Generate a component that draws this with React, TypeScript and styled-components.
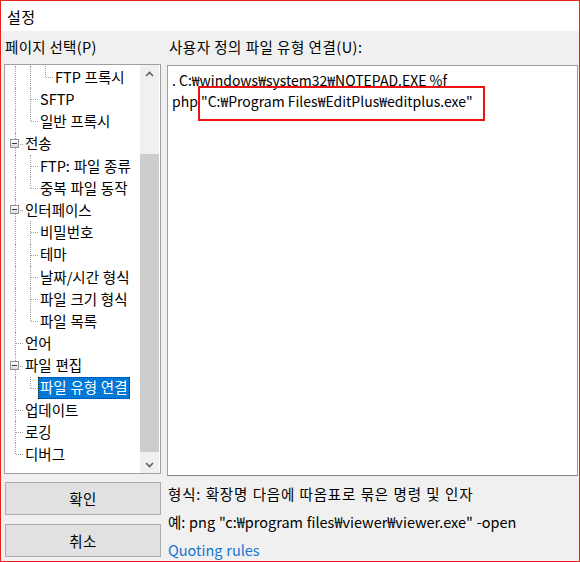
import React from 'react';
import styled, { createGlobalStyle } from 'styled-components';

const GlobalStyle = createGlobalStyle`
  html, body {
    margin: 0;
    padding: 0;
    background: #ffffff;
  }
  body {
    font-family: "Noto Sans CJK KR", "Noto Sans", sans-serif;
    font-size: 14.5px;
    color: #000;
  }
`;

// window frame
const Window = styled.div`
  width: 580px;
  height: 562px;
  box-sizing: border-box;
  border: 1px solid #e8231d;
  background: #f0f0f0;
  display: flex;
  flex-direction: column;
  overflow: hidden;
`;

const TitleBar = styled.div`
  flex: none;
  height: 30px;
  background: #ffffff;
  display: flex;
  align-items: center;
  padding-left: 6px;
  font-size: 15px;
  letter-spacing: 0.5px;
  line-height: 1;
`;

const Body = styled.div`
  display: grid;
  grid-template-columns: 157px 411px;
  column-gap: 6px;
  padding: 2px 0 0 3px;
`;

const Column = styled.div`
  display: flex;
  flex-direction: column;
`;

const GroupLabel = styled.div<{ $indent?: number; $spread?: number }>`
  flex: none;
  height: 31px;
  box-sizing: border-box;
  padding-bottom: 3px;
  display: flex;
  align-items: center;
  padding-left: ${(p) => p.$indent ?? 1}px;
  letter-spacing: ${(p) => p.$spread ?? 0}px;
  line-height: 1;
  white-space: nowrap;
`;

// tree view
const TreeBox = styled.div`
  flex: none;
  height: 410px;
  box-sizing: border-box;
  border: 1px solid #a0a0a0;
  background: #ffffff;
  display: flex;
`;

const TreeList = styled.div`
  flex: 1;
  padding: 1px 0 0 3px;
  overflow: hidden;
`;

const TreeRow = styled.div`
  height: 22.2px;
  display: flex;
  align-items: stretch;
`;

type GuideKind = 'line' | 'tee' | 'elbow' | 'blank';

const Guide = styled.div<{ $kind: GuideKind }>`
  width: 15px;
  flex: none;
  position: relative;

  &::before {
    content: '';
    display: ${(p) => (p.$kind === 'blank' ? 'none' : 'block')};
    position: absolute;
    left: 7px;
    top: 0;
    bottom: ${(p) => (p.$kind === 'elbow' ? '50%' : '0')};
    border-left: 1px dotted #a0a0a0;
  }

  &::after {
    content: '';
    display: ${(p) => (p.$kind === 'tee' || p.$kind === 'elbow' ? 'block' : 'none')};
    position: absolute;
    left: 8px;
    right: 0;
    top: 50%;
    border-top: 1px dotted #a0a0a0;
  }
`;

const Expander = styled.span`
  position: absolute;
  left: 2px;
  top: 50%;
  margin-top: -5px;
  width: 9px;
  height: 9px;
  box-sizing: border-box;
  border: 1px solid #929292;
  background: linear-gradient(#ffffff, #dcdcdc);
  z-index: 1;

  &::before {
    content: '';
    position: absolute;
    left: 1px;
    right: 1px;
    top: 3px;
    border-top: 1px solid #2d3a5a;
  }
`;

const ItemLabel = styled.span<{ $selected?: boolean }>`
  display: flex;
  align-items: center;
  padding: 0 2px;
  white-space: nowrap;
  line-height: 1;
  word-spacing: 0.5px;
  box-sizing: border-box;
  color: ${(p) => (p.$selected ? '#ffffff' : '#000000')};
  background: ${(p) => (p.$selected ? '#0078d7' : 'transparent')};
  outline: ${(p) => (p.$selected ? '1px dotted #3a2a00' : 'none')};
  outline-offset: -1px;
`;

const ScrollBar = styled.div`
  width: 19px;
  margin-right: 1px;
  background: #f0f0f0;
  display: flex;
  flex-direction: column;
`;

const ScrollButton = styled.div`
  height: 17px;
  display: flex;
  align-items: center;
  justify-content: center;
  color: #606060;
`;

const ScrollThumb = styled.div`
  margin-top: 72px;
  height: 298px;
  background: #cdcdcd;
`;

const Spacer = styled.div`
  flex: 1;
`;

// buttons
const ButtonStack = styled.div`
  display: flex;
  flex-direction: column;
  gap: 9px;
  padding: 8px 0 0 1px;
`;

const DialogButton = styled.button`
  flex: none;
  height: 33px;
  box-sizing: border-box;
  border: 1px solid #adadad;
  background: #e1e1e1;
  font-family: inherit;
  font-size: 14.5px;
  letter-spacing: 0.5px;
  color: #000;
  padding: 0;
`;

// right panel
const EditBox = styled.div`
  flex: none;
  position: relative;
  margin-top: 1px;
  height: 411px;
  box-sizing: border-box;
  border: 1px solid #a0a0a0;
  border-bottom-color: #828282;
  background: #ffffff;
  padding: 4px 0 0 4px;
  font-size: 14px;
  line-height: 21px;
`;

const EditLine = styled.div`
  white-space: pre;
`;

const Highlight = styled.div`
  position: absolute;
  left: 30px;
  top: 20px;
  width: 287px;
  height: 35px;
  box-sizing: border-box;
  border: 2px solid #ee1111;
`;

const HintList = styled.div`
  display: flex;
  flex-direction: column;
  padding: 4px 0 0 1px;
`;

const Hint = styled.div<{ $spread?: number }>`
  flex: none;
  height: 28px;
  display: flex;
  align-items: center;
  line-height: 1;
  white-space: pre;
  word-spacing: 0.5px;
  letter-spacing: ${(p) => p.$spread ?? 0}px;
`;

const HintLink = styled(Hint)`
  color: #1a73d1;
`;

const Chevron = ({ up }: { up?: boolean }) => (
  <svg width="9" height="6" viewBox="0 0 9 6">
    <path
      d={up ? 'M1 5 L4.5 1.5 L8 5' : 'M1 1 L4.5 4.5 L8 1'}
      fill="none"
      stroke="currentColor"
      strokeWidth="1.6"
    />
  </svg>
);

type Item = {
  label: string;
  guides: GuideKind[];
  expander?: boolean;
  selected?: boolean;
};

const items: Item[] = [
  { label: 'FTP 프록시', guides: ['line', 'line', 'elbow'] },
  { label: 'SFTP', guides: ['line', 'tee'] },
  { label: '일반 프록시', guides: ['line', 'elbow'] },
  { label: '전송', guides: ['tee'], expander: true },
  { label: 'FTP: 파일 종류', guides: ['line', 'tee'] },
  { label: '중복 파일 동작', guides: ['line', 'elbow'] },
  { label: '인터페이스', guides: ['tee'], expander: true },
  { label: '비밀번호', guides: ['line', 'tee'] },
  { label: '테마', guides: ['line', 'tee'] },
  { label: '날짜/시간 형식', guides: ['line', 'tee'] },
  { label: '파일 크기 형식', guides: ['line', 'tee'] },
  { label: '파일 목록', guides: ['line', 'elbow'] },
  { label: '언어', guides: ['tee'] },
  { label: '파일 편집', guides: ['tee'], expander: true },
  { label: '파일 유형 연결', guides: ['line', 'elbow'], selected: true },
  { label: '업데이트', guides: ['tee'] },
  { label: '로깅', guides: ['tee'] },
  { label: '디버그', guides: ['elbow'] },
];

const App: React.FC = () => {
  return (
    <>
      <GlobalStyle />
      <Window>
        <TitleBar>설정</TitleBar>
        <Body>
          <Column>
            <GroupLabel $spread={0.3}>페이지 선택(P)</GroupLabel>
            <TreeBox>
              <TreeList>
                {items.map((item) => (
                  <TreeRow key={item.label}>
                    {item.guides.map((g, i) => (
                      <Guide key={i} $kind={g}>
                        {item.expander && i === 0 && <Expander />}
                      </Guide>
                    ))}
                    <ItemLabel $selected={item.selected}>{item.label}</ItemLabel>
                  </TreeRow>
                ))}
              </TreeList>
              <ScrollBar>
                <ScrollButton>
                  <Chevron up />
                </ScrollButton>
                <ScrollThumb />
                <Spacer />
                <ScrollButton>
                  <Chevron />
                </ScrollButton>
              </ScrollBar>
            </TreeBox>
            <ButtonStack>
              <DialogButton>확인</DialogButton>
              <DialogButton>취소</DialogButton>
            </ButtonStack>
          </Column>
          <Column>
            <GroupLabel $indent={2} $spread={0.5}>
              사용자 정의 파일 유형 연결(U):
            </GroupLabel>
            <EditBox>
              <EditLine>. C:₩windows₩system32₩NOTEPAD.EXE %f</EditLine>
              <EditLine>php "C:₩Program Files₩EditPlus₩editplus.exe"</EditLine>
              <Highlight />
            </EditBox>
            <HintList>
              <Hint $spread={0.8}>형식: 확장명 다음에 따옴표로 묶은 명령 및 인자</Hint>
              <Hint>예: png "c:₩program files₩viewer₩viewer.exe" -open</Hint>
              <HintLink>Quoting rules</HintLink>
            </HintList>
          </Column>
        </Body>
      </Window>
    </>
  );
};

export default App;
